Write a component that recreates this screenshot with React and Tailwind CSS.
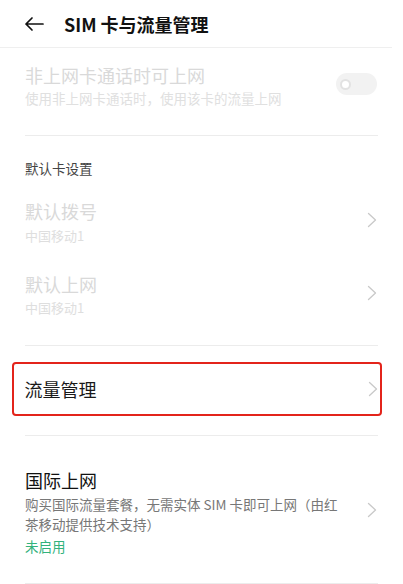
const FONT = { fontFamily: '"Noto Sans CJK SC", "Noto Sans", sans-serif' };

const Chevron = () => (
  <svg width="10" height="16" viewBox="0 0 10 16" fill="none">
    <polyline points="1.5,1.5 8.5,8 1.5,14.5" stroke="#c9c9c9" strokeWidth="1.3" strokeLinecap="round" strokeLinejoin="round" />
  </svg>
);

const Divider = () => <div className="mx-[25px] h-px bg-[#ececec]" />;

const App = () => {
  return (
    <div className="w-[403px] h-[584px] overflow-hidden bg-white" style={FONT}>
      {/* Header */}
      <div className="flex items-center h-[48px] border-b border-[#efefef] mr-[11px]">
        <div className="pl-[24px] pr-[20px] flex items-center">
          <svg width="20" height="16" viewBox="0 0 20 16" fill="none">
            <path d="M19 8H2M8 2L2 8l6 6" stroke="#111" strokeWidth="1.7" strokeLinecap="round" strokeLinejoin="round" />
          </svg>
        </div>
        <span className="text-[18px] font-bold text-[#111] leading-[26px]">SIM 卡与流量管理</span>
      </div>

      {/* Data while calling */}
      <div className="flex items-center px-[25px] pt-[15px] pb-[28px]">
        <div className="flex-1 flex flex-col gap-[2px]">
          <span className="text-[18px] leading-[24px] text-[#d9d9d9]">非上网卡通话时可上网</span>
          <span className="text-[13.5px] leading-[18px] text-[#e0e0e0]">使用非上网卡通话时，使用该卡的流量上网</span>
        </div>
        <div className="w-[41px] h-[22px] rounded-full bg-[#f2f2f2] flex items-center pl-[4px] -mt-[2px] mr-[1px]">
          <div className="w-[11px] h-[11px] rounded-full bg-white border-2 border-[#e2e2e2]" />
        </div>
      </div>
      <Divider />

      {/* Default card */}
      <div className="px-[25px] pt-[22px] text-[13.5px] leading-[20px] text-[#444]">默认卡设置</div>

      <div className="flex items-center px-[25px] pt-[21px]">
        <div className="flex-1 flex flex-col gap-[4px]">
          <span className="text-[18px] leading-[24px] text-[#d9d9d9]">默认拨号</span>
          <span className="text-[13px] leading-[18px] text-[#dedede]">中国移动1</span>
        </div>
        <div className="pr-[1px] -mt-[4px]"><Chevron /></div>
      </div>

      <div className="flex items-center px-[25px] pt-[27px] pb-[28px]">
        <div className="flex-1 flex flex-col gap-[3px]">
          <span className="text-[18px] leading-[24px] text-[#d9d9d9]">默认上网</span>
          <span className="text-[13px] leading-[18px] text-[#dedede]">中国移动1</span>
        </div>
        <div className="pr-[1px] -mt-[4px]"><Chevron /></div>
      </div>
      <Divider />

      {/* Data management, highlighted */}
      <div className="pt-[16px] pb-[19px] pl-[12px] pr-[21px]">
        <div className="h-[54px] border-[2.5px] border-[#e3241b] rounded-[4px] flex items-center pl-[10.5px] pr-[2.5px]">
          <span className="flex-1 text-[18px] leading-[24px] text-[#1a1a1a]">流量管理</span>
          <Chevron />
        </div>
      </div>
      <Divider />

      {/* International roaming */}
      <div className="flex items-center px-[25px] pt-[31px] pb-[27px]">
        <div className="flex-1 flex flex-col">
          <span className="text-[18px] leading-[26px] text-[#111]">国际上网</span>
          <span className="mt-[1px] text-[13.5px] leading-[20px] text-[#777] whitespace-nowrap">购买国际流量套餐，无需实体 SIM 卡即可上网（由红</span>
          <span className="text-[13.5px] leading-[20px] text-[#777]">茶移动提供技术支持）</span>
          <span className="mt-[2px] text-[13.5px] leading-[20px] text-[#32b27c]">未启用</span>
        </div>
        <div className="pr-[1px] -mt-[4px]"><Chevron /></div>
      </div>
      <Divider />
    </div>
  );
};

export default App;
